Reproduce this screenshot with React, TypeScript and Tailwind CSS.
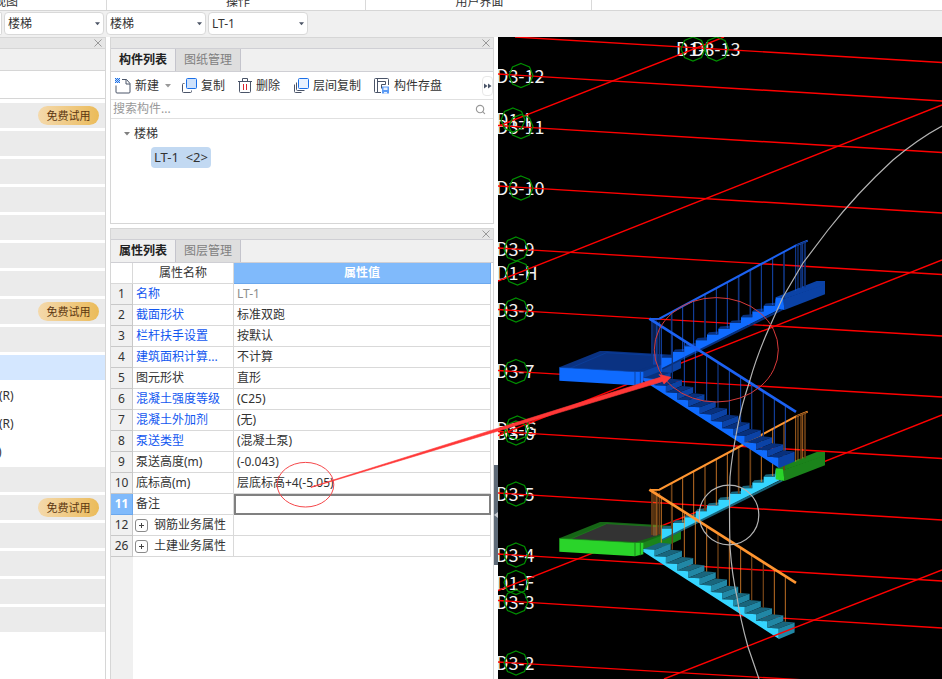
import * as React from "react"
import { Search } from "lucide-react"
import { clsx } from "clsx"

interface PropertyRow {
  no: number
  name: string
  value?: string
  link?: boolean
  muted?: boolean
  group?: boolean
}

const properties: PropertyRow[] = [
  { no: 1, name: "名称", value: "LT-1", link: true, muted: true },
  { no: 2, name: "截面形状", value: "标准双跑", link: true },
  { no: 3, name: "栏杆扶手设置", value: "按默认", link: true },
  { no: 4, name: "建筑面积计算...", value: "不计算", link: true },
  { no: 5, name: "图元形状", value: "直形" },
  { no: 6, name: "混凝土强度等级", value: "(C25)", link: true },
  { no: 7, name: "混凝土外加剂", value: "(无)", link: true },
  { no: 8, name: "泵送类型", value: "(混凝土泵)", link: true },
  { no: 9, name: "泵送高度(m)", value: "(-0.043)" },
  { no: 10, name: "底标高(m)", value: "层底标高+4(-5.05)" },
  { no: 11, name: "备注" },
  { no: 12, name: "钢筋业务属性", group: true },
  { no: 26, name: "土建业务属性", group: true },
]

const SELECTED_ROW = 11

type SideKind = "plain" | "trial" | "active" | "text"

const sideRows: { kind: SideKind; text?: string }[] = [
  { kind: "trial" },
  { kind: "plain" },
  { kind: "plain" },
  { kind: "plain" },
  { kind: "plain" },
  { kind: "plain" },
  { kind: "plain" },
  { kind: "trial" },
  { kind: "plain" },
  { kind: "active" },
  { kind: "text", text: "(R)" },
  { kind: "text", text: "(R)" },
  { kind: "text", text: ")" },
  { kind: "plain" },
  { kind: "trial" },
  { kind: "plain" },
  { kind: "plain" },
  { kind: "plain" },
  { kind: "plain" },
]

function Caret({ className }: { className?: string }) {
  return (
    <svg viewBox="0 0 6 4" className={clsx("h-1 w-1.5", className)} aria-hidden="true">
      <path d="M0 0h6L3 3.500z" fill="currentColor" />
    </svg>
  )
}

function CloseButton({ label }: { label: string }) {
  return (
    <button type="button" aria-label={label} className="text-[#999]">
      <svg viewBox="0 0 8 8" className="size-2" aria-hidden="true">
        <path d="M.5.5l7 7M7.5.5l-7 7" stroke="currentColor" fill="none" />
      </svg>
    </button>
  )
}

function Ribbon() {
  return (
    <div className="flex h-[11px] items-end overflow-hidden border-b border-[#d6d6d6] bg-white text-center leading-4">
      <div className="-ml-[94px] w-[201px] shrink-0 border-r border-[#d9d9d9]">视图</div>
      <div className="w-[259px] shrink-0 border-r border-[#d9d9d9] pl-1">操作</div>
      <div className="w-[226px] shrink-0 border-r border-[#d9d9d9] pl-0.5">用户界面</div>
    </div>
  )
}

function ToolbarSelect({ label, value }: { label: string; value: string }) {
  return (
    <div className="relative">
      <select
        aria-label={label}
        defaultValue={value}
        className="h-[23px] w-[100px] appearance-none rounded border border-[#d9d9d9] bg-white pl-[3px] text-[#333]"
      >
        <option>{value}</option>
      </select>
      <Caret className="pointer-events-none absolute top-2.5 right-1 w-[5px] text-[#4d5566]" />
    </div>
  )
}

function SidePanel() {
  return (
    <aside className="w-[106px] shrink-0 border-r border-[#d6d6d6] bg-white">
      <div className="flex h-3 items-center justify-end border-y border-[#d6d6d6] bg-[#e6e6e6] pr-[3px]">
        <CloseButton label="关闭导航" />
      </div>
      <div className="h-[22px] border-b border-[#d6d6d6] bg-[#f0f0f0]" />
      <div className="h-7 border-b border-[#d6d6d6]" />
      <ul className="flex flex-col gap-[3px] pt-1">
        {sideRows.map((row, i) => (
          <li
            key={i}
            className={clsx(
              "flex h-[25px] items-center",
              (row.kind === "plain" || row.kind === "trial") && "bg-[#ebebeb]",
              row.kind === "active" && "bg-[#d4e7ff]"
            )}
          >
            {row.kind === "trial" && (
              <button
                type="button"
                className="mr-1.5 ml-auto h-[19px] w-[61px] rounded-full bg-linear-to-r from-[#f4d9ab] to-[#ebbb58] text-[11px] leading-[19px] text-[#5c3610]"
              >
                免费试用
              </button>
            )}
            {row.text && <span className={row.text === ")" ? "-ml-0.5" : "-ml-px"}>{row.text}</span>}
          </li>
        ))}
      </ul>
    </aside>
  )
}

function PanelHeader({ tabs, closeLabel }: { tabs: string[]; closeLabel: string }) {
  return (
    <>
      <div className="flex h-2.5 items-center justify-end bg-[#e6e6e6] pr-[3px]">
        <CloseButton label={closeLabel} />
      </div>
      <div role="tablist" className="flex h-6 border-y border-[#cfcfd4] bg-[#f0f0f0]">
        {tabs.map((tab, i) => (
          <button
            key={tab}
            type="button"
            role="tab"
            aria-selected={i === 0}
            className={clsx(
              "w-[65px] border-r border-[#c4c4cc] text-center",
              i === 0 ? "font-bold text-[#222]" : "bg-[#dedede] text-[#808080]"
            )}
          >
            {tab}
          </button>
        ))}
      </div>
    </>
  )
}

function NewIcon() {
  return (
    <svg viewBox="0 0 16 16" className="size-4 shrink-0" fill="none" aria-hidden="true">
      <path d="M7 1.5h4.5l3.500 4V14a1 1 0 0 1-1 1H2a1 1 0 0 1-1-1V7.500" stroke="#4a5468" />
      <path d="M11 1.500V6h4" stroke="#4a5468" />
      <path d="M0 0h5v5H0z" fill="#bcd8ff" />
      <path d="M0 0h1v1H0zM2 0h1v1H2zM4 0h1v1H4zM1 1h1v1H1zM3 1h1v1H3zM0 2h1v1H0zM2 2h1v1H2zM4 2h1v1H4zM1 3h1v1H1zM3 3h1v1H3zM0 4h1v1H0zM2 4h1v1H2zM4 4h1v1H4z" fill="#1f6fe0" />
    </svg>
  )
}

function CopyIcon() {
  return (
    <svg viewBox="0 0 16 16" className="size-4 shrink-0" fill="none" aria-hidden="true">
      <path d="M3.500 5.500h-1a1 1 0 0 0-1 1v7a1 1 0 0 0 1 1h7a1 1 0 0 0 1-1v-1" stroke="#4a5468" />
      <rect x="5.500" y=".5" width="10" height="10" rx="1" fill="#cfe2fb" stroke="#1a6fe8" />
    </svg>
  )
}

function TrashIcon() {
  return (
    <svg viewBox="0 0 14 16" className="h-4 w-3.5 shrink-0" fill="none" aria-hidden="true">
      <path d="M0 3.500h14M4.500 3.500v-3h5v3M1.500 3.500v10a1 1 0 0 0 1 1h9a1 1 0 0 0 1-1v-10" stroke="#4a5468" />
      <path d="M5.500 6v6M8.500 6v6" stroke="#d9242c" />
    </svg>
  )
}

function LayerCopyIcon() {
  return (
    <svg viewBox="0 0 16 16" className="size-4 shrink-0" fill="none" aria-hidden="true">
      <path d="M1.500 6.500v7a1 1 0 0 0 1 1h6" stroke="#4a5468" />
      <path d="M3.500 4.500v7a1 1 0 0 0 1 1h7" stroke="#4a5468" />
      <rect x="5.500" y=".5" width="10" height="10" rx="1" fill="#e9f2ff" stroke="#1a6fe8" />
    </svg>
  )
}

function SaveIcon() {
  return (
    <svg viewBox="0 0 16 16" className="size-4 shrink-0" fill="none" aria-hidden="true">
      <path d="M7 14.500H1.500a1 1 0 0 1-1-1v-12a1 1 0 0 1 1-1h12a1 1 0 0 1 1 1V7M3.500.5v14M3.500 3.500h8v3h-4v4" stroke="#4a5468" />
      <path d="M8 8.500h7v7H8z" fill="#5b9bf5" />
      <path d="M9.500 9.500h4V12h-4zM10 14h3v1.500h-3z" fill="#e9f2ff" />
    </svg>
  )
}

function ToolButton({ icon, label, className }: { icon: React.ReactNode; label: string; className?: string }) {
  return (
    <button type="button" className={clsx("flex shrink-0 items-center gap-1 whitespace-nowrap", className)}>
      {icon}
      {label}
    </button>
  )
}

function ComponentPanel() {
  return (
    <section className="flex h-[187px] flex-col border border-[#d6d6d6] bg-white">
      <PanelHeader tabs={["构件列表", "图纸管理"]} closeLabel="关闭构件列表" />
      <div className="flex h-7 items-center border-b border-[#e0e0e0] pl-1">
        <ToolButton icon={<NewIcon />} label="新建" />
        <button type="button" aria-label="新建选项" className="ml-1.5 text-[#999]">
          <Caret />
        </button>
        <ToolButton icon={<CopyIcon />} label="复制" className="ml-2.5" />
        <ToolButton icon={<TrashIcon />} label="删除" className="ml-[13px]" />
        <ToolButton icon={<LayerCopyIcon />} label="层间复制" className="ml-[13px]" />
        <ToolButton icon={<SaveIcon />} label="构件存盘" className="ml-[13px]" />
        <button
          type="button"
          aria-label="更多"
          className="ml-auto flex h-5 w-[11px] items-center justify-center rounded border border-[#e8e8e8] text-[#4a5468]"
        >
          <svg viewBox="0 0 8 6" className="h-1.5 w-2 shrink-0" aria-hidden="true">
            <path d="M0 .5l3.500 2.500L0 5.500zM4 .5l3.500 2.500L4 5.500z" fill="currentColor" />
          </svg>
        </button>
      </div>
      <label className="flex h-[19px] items-center border-b border-[#e0e0e0] pr-[7px] pl-0.5">
        <input
          type="text"
          aria-label="搜索构件"
          placeholder="搜索构件..."
          className="min-w-0 flex-1 outline-none placeholder:text-[#999]"
        />
        <Search className="size-[11px] text-[#999]" strokeWidth={2.5} aria-hidden="true" />
      </label>
      <div className="flex flex-col items-start gap-0.5 pt-1 pl-[13px]">
        <button type="button" className="flex h-[22px] items-center gap-1">
          <Caret className="text-[#808080]" />
          楼梯
        </button>
        <button type="button" className="ml-[27px] h-[21px] rounded bg-[#c2d9f2] px-[3px] text-[13px] whitespace-pre">
          {"LT-1  <2>"}
        </button>
      </div>
    </section>
  )
}

function PropertyPanel() {
  return (
    <section className="mt-1 flex flex-1 flex-col border border-b-0 border-[#d6d6d6] bg-white">
      <PanelHeader tabs={["属性列表", "图层管理"]} closeLabel="关闭属性列表" />
      <div className="flex-1 bg-linear-to-r from-[#f0f0f0] from-[22px] to-white to-[22px]">
        <table className="w-[380px] table-fixed border-separate border-spacing-0 bg-white">
          <colgroup>
            <col className="w-[22px]" />
            <col className="w-[101px]" />
            <col />
          </colgroup>
          <thead>
            <tr className="h-[21px]">
              <th className="border-r border-b border-[#d9d9d9] p-0" />
              <th className="border-r border-b border-[#d9d9d9] p-0 font-normal">属性名称</th>
              <th className="border-r border-b border-[#6ba8ee] bg-[#80bafb] p-0 text-white">属性值</th>
            </tr>
          </thead>
          <tbody>
            {properties.map((row) => (
              <tr key={row.no} className="h-[21px] leading-5">
                <th
                  className={clsx(
                    "border-r border-b p-0 text-center",
                    row.no === SELECTED_ROW
                      ? "border-[#6ba8ee] bg-[#80bafb] font-bold text-white"
                      : "border-[#c8c8c8] bg-[#f0f0f0] font-normal"
                  )}
                >
                  {row.no}
                </th>
                <td
                  className={clsx(
                    "border-r border-b border-[#d9d9d9] p-0 pl-[3px] whitespace-nowrap",
                    row.link && "text-[#1257f0]"
                  )}
                >
                  {row.group ? (
                    <span className="flex items-center gap-1.5">
                      <button
                        type="button"
                        aria-label={`展开${row.name}`}
                        className="-ml-px flex size-[13px] items-center justify-center rounded-[3px] border border-[#8a8a8a]"
                      >
                        <svg viewBox="0 0 5 5" className="size-[5px]" aria-hidden="true">
                          <path d="M2 0h1v2h2v1H3v2H2V3H0V2h2z" fill="#444" />
                        </svg>
                      </button>
                      {row.name}
                    </span>
                  ) : (
                    row.name
                  )}
                </td>
                {row.no === SELECTED_ROW ? (
                  <td className="p-0">
                    <input
                      type="text"
                      aria-label={row.name}
                      className="block h-[21px] w-full border-2 border-[#808080] px-0.5 outline-none"
                    />
                  </td>
                ) : (
                  <td
                    className={clsx(
                      "border-r border-b border-[#d9d9d9] p-0 pl-[3px] whitespace-nowrap",
                      row.muted && "text-[#8c8c8c]"
                    )}
                  >
                    {row.value}
                  </td>
                )}
              </tr>
            ))}
          </tbody>
        </table>
      </div>
    </section>
  )
}

// Grid axes, as [x1, y1, x2, y2]
const axes = [
  [515, 37, 942, 62.5],
  [498, 74, 942, 101],
  [498, 125.5, 942, 152.5],
  [498, 186, 942, 213],
  [498, 248, 942, 274.5],
  [498, 309.5, 942, 336],
  [498, 370.5, 942, 397],
  [498, 431.5, 942, 458.5],
  [498, 493, 942, 520],
  [498, 554, 942, 581],
  [498, 600.5, 942, 628],
  [498, 662, 942, 688],
  [500, 125.5, 724, 37],
  [498, 281, 942, 105],
  [498, 435.5, 942, 260],
  [498, 590.5, 942, 415],
]

// Axis bubbles: text, text x, baseline, circle centre
const bubbles: [string, number, number, number, number][] = [
  ["D1-I", 676, 56, 693, 49],
  ["D3-13", 692, 56, 716.5, 49],
  ["D3-12", 496, 82.5, 521, 75.5],
  ["D1-I", 496, 127, 513, 120],
  ["D3-11", 496, 133.5, 521, 126.5],
  ["D3-10", 496, 194.5, 521, 188],
  ["D3-9", 496, 255.5, 516, 249],
  ["D1-H", 496, 280, 517.5, 273],
  ["D3-8", 496, 317, 516, 310],
  ["D3-7", 496, 378, 516, 371.5],
  ["D1-G", 496, 436, 517.5, 428],
  ["D3-6", 496, 439.5, 516, 433],
  ["D3-5", 496, 500.5, 516, 494],
  ["D3-4", 496, 561.5, 516, 555],
  ["D1-F", 496, 590, 516, 582.5],
  ["D3-3", 496, 608.5, 516, 602],
  ["D3-2", 496, 669.5, 516, 663],
]

function octagon(cx: number, cy: number, r: number) {
  return Array.from({ length: 8 }, (_, i) => {
    const a = (i * Math.PI) / 4
    return `${(cx + r * Math.sin(a)).toFixed(1)},${(cy - r * Math.cos(a)).toFixed(1)}`
  }).join(" ")
}

interface StairColors {
  slab: string
  slabSide: string
  slabTop: string
  slabInner: string
  step: string
  riser: string
  tread: string
  rail: string
  railDim: string
}

const blueStair: StairColors = {
  slab: "#0f6bff",
  slabSide: "#0b42a5",
  slabTop: "#0a3282",
  slabInner: "#0a3282",
  step: "#0f6bff",
  riser: "#0b42a5",
  tread: "#08307c",
  rail: "#1c62f2",
  railDim: "#10347e",
}

const greenStair: StairColors = {
  slab: "#2ad42a",
  slabSide: "#1b831b",
  slabTop: "#166516",
  slabInner: "#333333",
  step: "#35d5ff",
  riser: "#2187a5",
  tread: "#19657c",
  rail: "#ff9530",
  railDim: "#6e4016",
}

const upBars = [365, 398, 431, 465, 499, 532, 566, 601, 634, 668, 702]
const upDim = [365, 465, 566, 601, 702]
const downBars = [334, 367, 403, 436, 470, 504, 538, 572, 605, 640, 673, 706]
const downDim = [367, 504, 605, 640]

// Drawn three times too large, the caller's transform brings it to size
function Stair({ c, transform }: { c: StairColors; transform: string }) {
  const up = Array.from({ length: 10 }, (_, k) => ({ x: 335 + 34 * k, y: 383 - 17.3 * k }))
  const down = Array.from({ length: 12 }, (_, k) => ({ x: 280 + 33.8 * k, y: 444 + 21.5 * k }))
  const upSide = up.map((s) => `${s.x},${s.y} ${s.x + 34},${s.y}`).join(" ")
  const downSide = down.map((s) => `${s.x},${s.y} ${s.x + 34},${s.y + 2}`).join(" ")

  return (
    <g transform={transform}>
      {/* landing at the top of the flight */}
      <polygon points="677,202 800,153 825,153 825,165 703,207" fill={c.slabSide} />
      <polygon points="700,207 825,163 825,193 703,240" fill={c.slabSide} />

      {/* half landing */}
      <polygon points="28,412 150,363 172,363 365,374 393,393 278,428" fill={c.slabTop} />
      <polygon points="62,414 170,368 345,378 340,398 257,423" fill={c.slabInner} />
      <path d="M62 414L170 368L345 378" fill="none" stroke={c.slabSide} strokeWidth="2" />
      <polygon points="278,425 340,402 393,390 393,415 345,437 280,447" fill={c.slabSide} />
      <polygon points="28,412 255,425 280,425 280,460 255,466 28,452" fill={c.slab} />
      <path d="M255 425v40M271 425v38" stroke={c.slabSide} strokeWidth="3" />
      <path d="M28 412L255 425" stroke={c.slabSide} strokeWidth="2" />

      {/* upper flight */}
      <path d="M337 416L697 238" stroke={c.tread} strokeWidth="6" />
      {up.map((s) => (
        <polygon
          key={s.x}
          points={`${s.x},${s.y} ${s.x + 6},${s.y - 7} ${s.x + 34},${s.y - 9} ${s.x + 34},${s.y}`}
          fill={c.tread}
        />
      ))}
      <polygon points={`335,415 ${upSide} 677,205 690,237`} fill={c.step} />
      <polygon points="677,202 700,205 703,240 677,235" fill={c.slab} />

      {/* lower flight */}
      {down.map((s, k) => {
        const depth = k === 11 ? 32 : 20
        return (
          <g key={s.x}>
            <polygon
              points={`${s.x},${s.y} ${s.x + 34},${s.y + 2} ${s.x + 82},${s.y - 16} ${s.x + 48},${s.y - 19}`}
              fill={c.tread}
            />
            <polygon
              points={`${s.x + 34},${s.y + 2} ${s.x + 82},${s.y - 16} ${s.x + 82},${s.y - 18 + depth} ${s.x + 34},${s.y + 2 + depth}`}
              fill={c.riser}
            />
          </g>
        )
      })}
      <polygon points={`280,452 ${downSide} 686,713`} fill={c.step} />

      {/* balusters */}
      {upBars.map((x) => (
        <line
          key={x}
          x1={x}
          x2={x}
          y1={267 - (x - 325) * 0.54}
          y2={364 - (x - 398) * 0.515}
          stroke={upDim.includes(x) ? c.railDim : c.rail}
          strokeWidth={upDim.includes(x) ? 5 : 3}
          opacity={upDim.includes(x) ? 1 : 0.75}
        />
      ))}
      {downBars.map((x) => (
        <line
          key={x}
          x1={x}
          x2={x}
          y1={267 + (x - 300) * 0.635}
          y2={469 + (x - 403) * 0.637}
          stroke={downDim.includes(x) ? c.railDim : c.rail}
          strokeWidth={downDim.includes(x) ? 4 : 3}
          opacity={downDim.includes(x) ? 1 : 0.75}
        />
      ))}
      <path d="M306 270V402M321 275V402M328 275V400M753 40V175M765 35V172" stroke={c.railDim} strokeWidth="5" />
      <path d="M312 270V404M318 270V404M737 45V182M744 42V178M758 38V172" stroke={c.rail} strokeWidth="2" />

      {/* handrails */}
      <path d="M300 267L328 266L738 46L773 32" fill="none" stroke={c.rail} strokeWidth="6" />
      <path d="M738 46L770 34" stroke={c.railDim} strokeWidth="4" />
      <path d="M298 266L738 546" stroke={c.rail} strokeWidth="8" />
    </g>
  )
}

function ModelView() {
  return (
    <main className="relative min-w-0 flex-1 overflow-hidden bg-black">
      <svg
        viewBox="498 37 444 642"
        preserveAspectRatio="xMinYMin slice"
        className="absolute inset-0 size-full"
        role="img"
        aria-label="楼梯三维视图"
      >
        <g fill="#f2f2f2" fontSize="18" fontFamily="'Noto Sans CJK SC', sans-serif">
          {bubbles.map(([text, x, y]) => (
            <text key={`${text}-${y}`} x={x} y={y}>
              {text}
            </text>
          ))}
        </g>
        <g stroke="#ff0000" strokeWidth="1.400">
          {axes.map(([x1, y1, x2, y2]) => (
            <line key={`${x1}-${y1}`} x1={x1} y1={y1} x2={x2} y2={y2} />
          ))}
        </g>
        <g fill="none" stroke="#009000" strokeWidth="1.200">
          {bubbles.map(([text, , , cx, cy]) => (
            <polygon key={`${text}-${cy}`} points={octagon(cx, cy, 12)} />
          ))}
        </g>
        <Stair c={greenStair} transform="translate(550 401) scale(.33333)" />
        <Stair c={blueStair} transform="translate(550 230) scale(.33333)" />
        <line x1="664" y1="679" x2="942" y2="570" stroke="#ff0000" strokeWidth="1.400" />
        <g fill="none" stroke="#b4b4b4" strokeWidth="1.200">
          <path d="M942 126Q918 139 893 160Q857 193 828 230L803 263L783 297L770 326Q757 355 750 380Q741 407 737 430Q732 455 730 477Q729 510 730 547Q732 575 737 597Q740 618 748 647L759 679" />
          <circle cx="729" cy="515" r="29.800" />
        </g>
      </svg>
    </main>
  )
}

// Red markup that runs across the panels and the 3D view
function Markup() {
  return (
    <svg
      viewBox="0 0 942 679"
      preserveAspectRatio="xMinYMin slice"
      className="pointer-events-none absolute inset-0 size-full"
      aria-hidden="true"
    >
      <ellipse cx="305.500" cy="484.700" rx="28.300" ry="22.300" fill="none" stroke="#f5474a" />
      <ellipse cx="716.300" cy="349.800" rx="62" ry="52.200" fill="none" stroke="#d83a3a" />
      <path d="M311 487L661 377L659 374.500L671 377.300L664 384L662.500 381.500L311 487.500z" fill="#ff3838" stroke="#ff3838" strokeWidth=".6" />
    </svg>
  )
}

export default function App() {
  return (
    <div className="relative flex min-h-screen flex-col overflow-hidden bg-white font-['Noto_Sans','Noto_Sans_CJK_SC',sans-serif] text-xs text-[#333]">
      <Ribbon />
      <div className="flex h-[26px] items-start gap-0.5 bg-[#f0f0f0] pt-px">
        <div className="h-[23px] w-0.5 rounded-r border border-l-0 border-[#d9d9d9] bg-white" />
        <ToolbarSelect label="构件类别" value="楼梯" />
        <ToolbarSelect label="构件类型" value="楼梯" />
        <ToolbarSelect label="构件" value="LT-1" />
      </div>
      <div className="flex flex-1">
        <SidePanel />
        <div className="ml-1 flex w-96 shrink-0 flex-col">
          <ComponentPanel />
          <PropertyPanel />
        </div>
        <div className="w-1 shrink-0 pt-[428px]">
          <button type="button" aria-label="收起面板" className="flex h-[100px] w-1 items-center bg-[#5f6b78]">
            <svg viewBox="0 0 4 6" className="h-1.5 w-1" aria-hidden="true">
              <path d="M4 0v6L0 3z" fill="#c8ccd2" />
            </svg>
          </button>
        </div>
        <ModelView />
      </div>
      <Markup />
    </div>
  )
}
